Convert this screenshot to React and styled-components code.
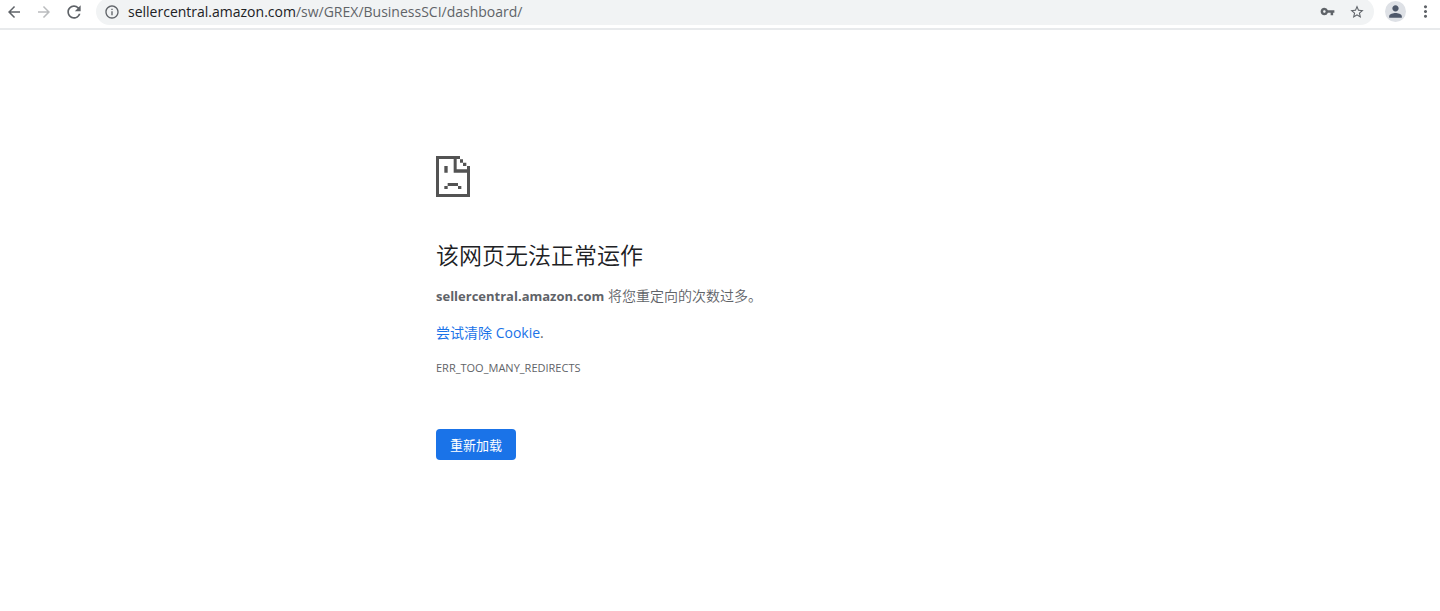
import styled, { createGlobalStyle } from "styled-components";
import {
    MdArrowBack,
    MdArrowForward,
    MdInfoOutline,
    MdMoreVert,
    MdPerson,
    MdRefresh,
    MdStarBorder,
    MdVpnKey,
} from "react-icons/md";

const GlobalStyle = createGlobalStyle`
    body {
        margin: 0;
        background: #fff;
        color: #5f6368;
        font-family: "Open Sans", "Noto Sans CJK SC", sans-serif;
        font-size: 14px;
    }
`;
const Toolbar = styled.header`
    display: flex;
    align-items: center;
    height: 30px;
    padding: 0 6px 5px 5px;
    border-bottom: 2px solid #e8eaec;
    box-sizing: border-box;
`;
const IconButton = styled.button`
    display: flex;
    flex-shrink: 0;
    align-items: center;
    justify-content: center;
    width: 18px;
    height: 18px;
    padding: 0;
    border: none;
    background: transparent;
    color: ${(props) => (props.disabled ? "#babcbe" : "#5f6368")};
    font-size: ${(props) => props.$size || 18}px;
    svg {
        flex-shrink: 0;
    }
`;
const NavButtons = styled.nav`
    display: flex;
    gap: 12px;
    margin-right: 13px;
`;
const AddressBar = styled.div`
    display: flex;
    flex: 1;
    align-items: center;
    gap: 12px;
    height: 27px;
    padding: 0 8px 0 7px;
    border-radius: 14px;
    background: #f1f3f4;
`;
const Site = styled.div`
    display: flex;
    flex: 1;
    align-items: center;
    gap: 7px;
    white-space: nowrap;
`;
const Url = styled.span`
    line-height: 19px;
`;
const UrlHost = styled.span`
    color: #202124;
`;
const Avatar = styled.button`
    display: flex;
    align-items: center;
    justify-content: center;
    width: 21px;
    height: 21px;
    margin: 0 10px 0 11px;
    padding: 0;
    border: none;
    border-radius: 50%;
    background: #dee1e6;
    color: #4e586a;
    font-size: 19px;
`;
const ErrorContent = styled.main`
    max-width: 568px;
    margin: 0 auto;
    padding-top: 126px;
`;
const SadPage = styled.svg`
    display: block;
    width: 34px;
    height: 41px;
    fill: #535353;
`;
const Title = styled.h1`
    margin: 40px 0 12px;
    color: #202124;
    font-size: 23px;
    font-weight: 350;
    line-height: 36px;
`;
const Message = styled.p`
    margin: 0 0 15px;
    font-weight: ${(props) => (props.$light ? 350 : 400)};
    line-height: 21px;
`;
const Host = styled.strong`
    font-size: 13px;
    font-weight: 700;
`;
const HelpLink = styled.a`
    color: #1a73e8;
    text-decoration: none;
`;
const ErrorCode = styled.p`
    margin: 0;
    font-size: 11px;
    line-height: 20px;
`;
const ReloadButton = styled.button`
    height: 31px;
    margin-top: 51px;
    padding: 0 14px;
    border: none;
    border-radius: 4px;
    background: #1a73e8;
    color: #fff;
    font-family: inherit;
    font-size: 13px;
    cursor: pointer;
`;

function BrowserToolbar() {
    return (
        <Toolbar>
            <NavButtons>
                <IconButton aria-label="后退">
                    <MdArrowBack />
                </IconButton>
                <IconButton aria-label="前进" disabled>
                    <MdArrowForward />
                </IconButton>
                <IconButton aria-label="刷新" $size={20}>
                    <MdRefresh />
                </IconButton>
            </NavButtons>
            <AddressBar>
                <Site>
                    <IconButton aria-label="网站信息" $size={16}>
                        <MdInfoOutline />
                    </IconButton>
                    <Url>
                        <UrlHost>sellercentral.amazon.com</UrlHost>
                        /sw/GREX/BusinessSCI/dashboard/
                    </Url>
                </Site>
                <IconButton aria-label="密码" $size={15}>
                    <MdVpnKey />
                </IconButton>
                <IconButton aria-label="收藏" $size={16}>
                    <MdStarBorder />
                </IconButton>
            </AddressBar>
            <Avatar aria-label="个人资料">
                <MdPerson />
            </Avatar>
            <IconButton aria-label="菜单" $size={19}>
                <MdMoreVert />
            </IconButton>
        </Toolbar>
    );
}

function App() {
    return (
        <>
            <GlobalStyle />
            <BrowserToolbar />
            <ErrorContent>
                <SadPage viewBox="0 0 102 123" aria-hidden="true">
                    <path
                        d="M0 0H72V10H81V20H91V30H102V123H0ZM9 9V114H93V50H53V9ZM62 9V40H93V30H81V20H72V9Z"
                        fillRule="evenodd"
                    />
                    <path d="M25 30H35V50H25ZM35 81H66V90H35ZM25 90H35V99H25ZM66 90H76V99H66Z" />
                </SadPage>
                <Title>该网页无法正常运作</Title>
                <Message $light>
                    <Host>sellercentral.amazon.com</Host> 将您重定向的次数过多。
                </Message>
                <Message>
                    <HelpLink href="#cookies">尝试清除 Cookie</HelpLink>.
                </Message>
                <ErrorCode>ERR_TOO_MANY_REDIRECTS</ErrorCode>
                <ReloadButton>重新加载</ReloadButton>
            </ErrorContent>
        </>
    );
}

export default App;
